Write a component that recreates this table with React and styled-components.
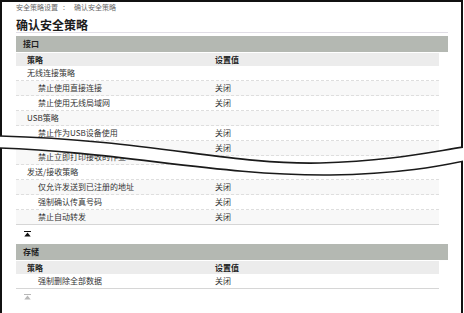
import React from "react";
import styled, { createGlobalStyle } from "styled-components";

const GlobalStyle = createGlobalStyle`
  html, body {
    margin: 0;
    padding: 0;
    background: #fff;
  }
  body {
    font-family: "Noto Sans CJK SC", "Noto Sans", sans-serif;
    color: #333;
  }
  * {
    box-sizing: border-box;
  }
`;

const Shell = styled.div`
  position: relative;
  width: 463px;
  height: 313px;
  overflow: hidden;
`;

const Frame = styled.div`
  height: 100%;
  border: 2px solid #111;
  border-bottom: none;
  overflow: hidden;
`;

const TopPart = styled.div`
  height: 148px;
  padding: 0 14px;
`;

// the part under the tear, cut along the lower curve
const BottomPart = styled.div`
  padding: 0 14px;
  background: #fff;
  clip-path: path("M-2,-2 C118,2 218,26 328,25 C398,24 438,16 462,11 L462,400 L-2,400 Z");
`;

const Crumbs = styled.div`
  display: flex;
  align-items: center;
  gap: 5px;
  height: 10px;
  font-size: 7px;
  line-height: 10px;
  color: #666;

  span:last-child {
    margin-left: 4px;
  }
`;

const Title = styled.h1`
  margin: 5px 0 0;
  width: 432px;
  height: 16px;
  font-size: 12px;
  line-height: 15px;
  font-weight: 700;
  color: #1c1c1c;
  border-bottom: 1px solid #e0dde5;
`;

const SectionBar = styled.div`
  margin-top: ${(p) => p.$gap || 3}px;
  width: 432px;
  height: 16px;
  padding-left: 7px;
  background: #b4b8b2;
  font-size: 8px;
  line-height: 16px;
  font-weight: 700;
  color: #1e1e1e;
`;

const Table = styled.div`
  width: 423px;
  margin-top: ${(p) => (p.$flush ? 0 : 1)}px;
`;

const ColHead = styled.div`
  display: grid;
  grid-template-columns: 199px 1fr;
  height: 13px;
  align-items: center;
  background: #ececec;
  font-size: 8px;
  font-weight: 700;
  color: #222;

  span:first-child {
    padding-left: 11px;
  }
`;

const Row = styled.div`
  display: grid;
  grid-template-columns: 199px 1fr;
  align-items: center;
  height: 15px;
  font-size: 8px;
  line-height: 14px;
  color: #333;
  background: ${(p) => (p.$shade ? "#f8f8f8" : "#fff")};
  border-bottom: 1px ${(p) => (p.$last ? "solid #d6d6d6" : "dashed #dedede")};
`;

const Label = styled.span`
  padding-left: ${(p) => (p.$sub ? 22 : 11)}px;
  white-space: nowrap;
`;

const Value = styled.span`
  white-space: nowrap;
`;

const TopLink = styled.div`
  margin-top: ${(p) => p.$gap}px;
  padding-left: 8px;
  height: 6px;
  display: flex;
  color: ${(p) => p.$color};
`;

const Tear = styled.svg`
  position: absolute;
  left: 0;
  top: 0;
  width: 463px;
  height: 313px;
  pointer-events: none;
  z-index: 2;
`;

const UPPER = "M0,136 C150,140 230,165 320,163 C390,161 430,152 464,147";
const LOWER = "M0,148 C120,152 220,176 330,175 C400,174 440,166 464,161";
const GAP =
  "M0,136 C150,140 230,165 320,163 C390,161 430,152 464,147 L464,161 C440,166 400,174 330,175 C220,176 120,152 0,148 Z";

const ToTop = ({ gap, color }) => (
  <TopLink $gap={gap} $color={color}>
    <svg width="7" height="6" viewBox="0 0 7 6">
      <rect x="0" y="0" width="7" height="1" fill="currentColor" />
      <polygon points="3.5,1.6 0.3,5.6 6.7,5.6" fill="currentColor" />
    </svg>
  </TopLink>
);

// shadeFirst: whether the first row of the list gets the grey stripe
const Rows = ({ items, shadeFirst }) =>
  items.map((r, i) => (
    <Row key={i} $shade={(i % 2 === 0) === shadeFirst} $last={r.last}>
      <Label $sub={r.sub}>{r.label}</Label>
      <Value>{r.value}</Value>
    </Row>
  ));

// rows above the tear; the last ones run under the gap
const interfaceTop = [
  { label: "无线连接策略" },
  { label: "禁止使用直接连接", value: "关闭", sub: true },
  { label: "禁止使用无线局域网", value: "关闭", sub: true },
  { label: "USB策略" },
  { label: "禁止作为USB设备使用", value: "关闭", sub: true },
  { label: "", value: "关闭", sub: true },
  { label: "" },
  { label: "" },
];

const interfaceBottom = [
  { label: "禁止立即打印接收的作业", sub: true },
  { label: "发送/接收策略" },
  { label: "仅允许发送到已注册的地址", value: "关闭", sub: true },
  { label: "强制确认传真号码", value: "关闭", sub: true },
  { label: "禁止自动转发", value: "关闭", sub: true, last: true },
];

const storage = [
  { label: "强制删除全部数据", value: "关闭", sub: true, last: true },
];

export default function App() {
  return (
    <>
      <GlobalStyle />
      <Shell>
        <Frame>
          <TopPart>
            <Crumbs>
              <span>安全策略设置</span>
              <span>:</span>
              <span>确认安全策略</span>
            </Crumbs>
            <Title>确认安全策略</Title>
            <SectionBar>接口</SectionBar>
            <Table>
              <ColHead>
                <span>策略</span>
                <span>设置值</span>
              </ColHead>
              <Rows items={interfaceTop} shadeFirst={false} />
            </Table>
          </TopPart>

          <BottomPart>
            <Table $flush>
              <Rows items={interfaceBottom} shadeFirst={true} />
            </Table>
            <ToTop gap={6} color="#111" />
            <SectionBar $gap={7}>存储</SectionBar>
            <Table>
              <ColHead>
                <span>策略</span>
                <span>设置值</span>
              </ColHead>
              <Rows items={storage} shadeFirst={false} />
            </Table>
            <ToTop gap={5} color="#b8b8b8" />
          </BottomPart>
        </Frame>

        <Tear viewBox="0 0 463 313">
          <path d={GAP} fill="#fff" />
          <path d={UPPER} fill="none" stroke="#1a1a1a" strokeWidth="1.6" />
          <path d={LOWER} fill="none" stroke="#1a1a1a" strokeWidth="1.6" />
        </Tear>
      </Shell>
    </>
  );
}
